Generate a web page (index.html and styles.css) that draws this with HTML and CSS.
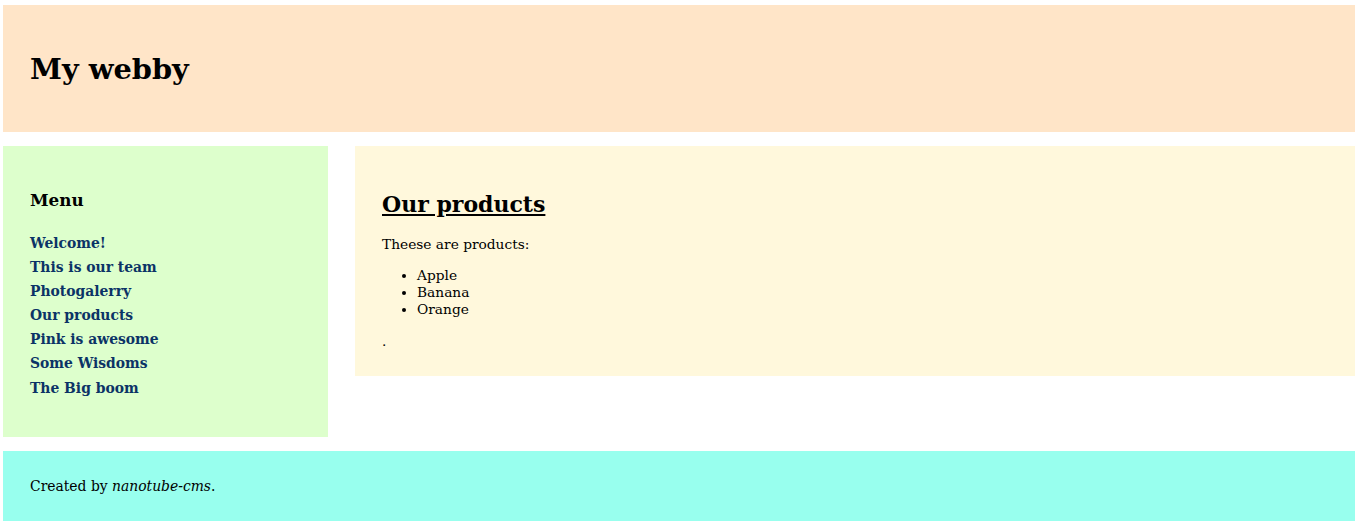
FILE: index.html
```html
<!DOCTYPE html>
<html lang="en">
<head>
<meta charset="utf-8">
<title>My webby</title>
<link rel="stylesheet" href="styles.css">
</head>
<body>
<div class="page">
  <header class="site-header">
    <h1 class="site-title">My webby</h1>
  </header>
  <div class="columns">
    <nav class="sidebar">
      <h3 class="menu-title">Menu</h3>
      <ul class="menu">
        <li><a href="#">Welcome!</a></li>
        <li><a href="#">This is our team</a></li>
        <li><a href="#">Photogalerry</a></li>
        <li><a href="#">Our products</a></li>
        <li><a href="#">Pink is awesome</a></li>
        <li><a href="#">Some Wisdoms</a></li>
        <li><a href="#">The Big boom</a></li>
      </ul>
    </nav>
    <main class="content">
      <h2 class="content-title">Our products</h2>
      <p class="text">Theese are products:</p>
      <ul class="products">
        <li>Apple</li>
        <li>Banana</li>
        <li>Orange</li>
      </ul>
      <p class="text last">.</p>
    </main>
  </div>
  <footer class="site-footer">
    <p class="footer-text">Created by <em>nanotube-cms</em>.</p>
  </footer>
</div>
</body>
</html>
```

FILE: styles.css
```css
html, body {
  margin: 0;
  padding: 0;
  background: #ffffff;
}

body {
  font-family: "DejaVu Serif", serif;
  font-size: 13.75px;
  line-height: 17px;
  color: #000000;
}

.page {
  padding: 5px 3px 4px 3px;
  display: flex;
  flex-direction: column;
  gap: 14px;
}

.site-header {
  background: #ffe5c8;
  height: 127px;
  padding: 0 27px;
  display: flex;
  align-items: center;
}

.site-title {
  margin: 0;
  font-size: 28.8px;
  line-height: normal;
  font-weight: bold;
}

.columns {
  display: flex;
  align-items: flex-start;
  gap: 27px;
}

.sidebar {
  background: #ddffcc;
  width: 325px;
  flex: none;
  box-sizing: border-box;
  height: 291px;
  padding: 27px;
}

.menu-title {
  margin: 17px 0 0 0;
  font-size: 16.8px;
  line-height: normal;
  font-weight: bold;
}

.menu {
  list-style: none;
  margin: 21px 0 0 0;
  padding: 0;
}

.menu li {
  line-height: 24.1px;
}

.menu a {
  color: #0b3366;
  font-size: 13.9px;
  font-weight: bold;
  text-decoration: none;
}

.content {
  flex: 1;
  background: #fff8dc;
  box-sizing: border-box;
  height: 230px;
  padding: 27px;
}

.content-title {
  margin: 18px 0 19px 0;
  font-size: 22px;
  line-height: normal;
  font-weight: bold;
  text-decoration: underline;
}

.text {
  margin: 0 0 14px 0;
}

.products {
  margin: 0 0 15px 0;
  padding-left: 35px;
  list-style: disc;
}

.site-footer {
  background: #98ffee;
  height: 70px;
  padding: 0 27px;
  display: flex;
  align-items: center;
}

.footer-text {
  margin: 0;
  font-size: 13.9px;
}
```
